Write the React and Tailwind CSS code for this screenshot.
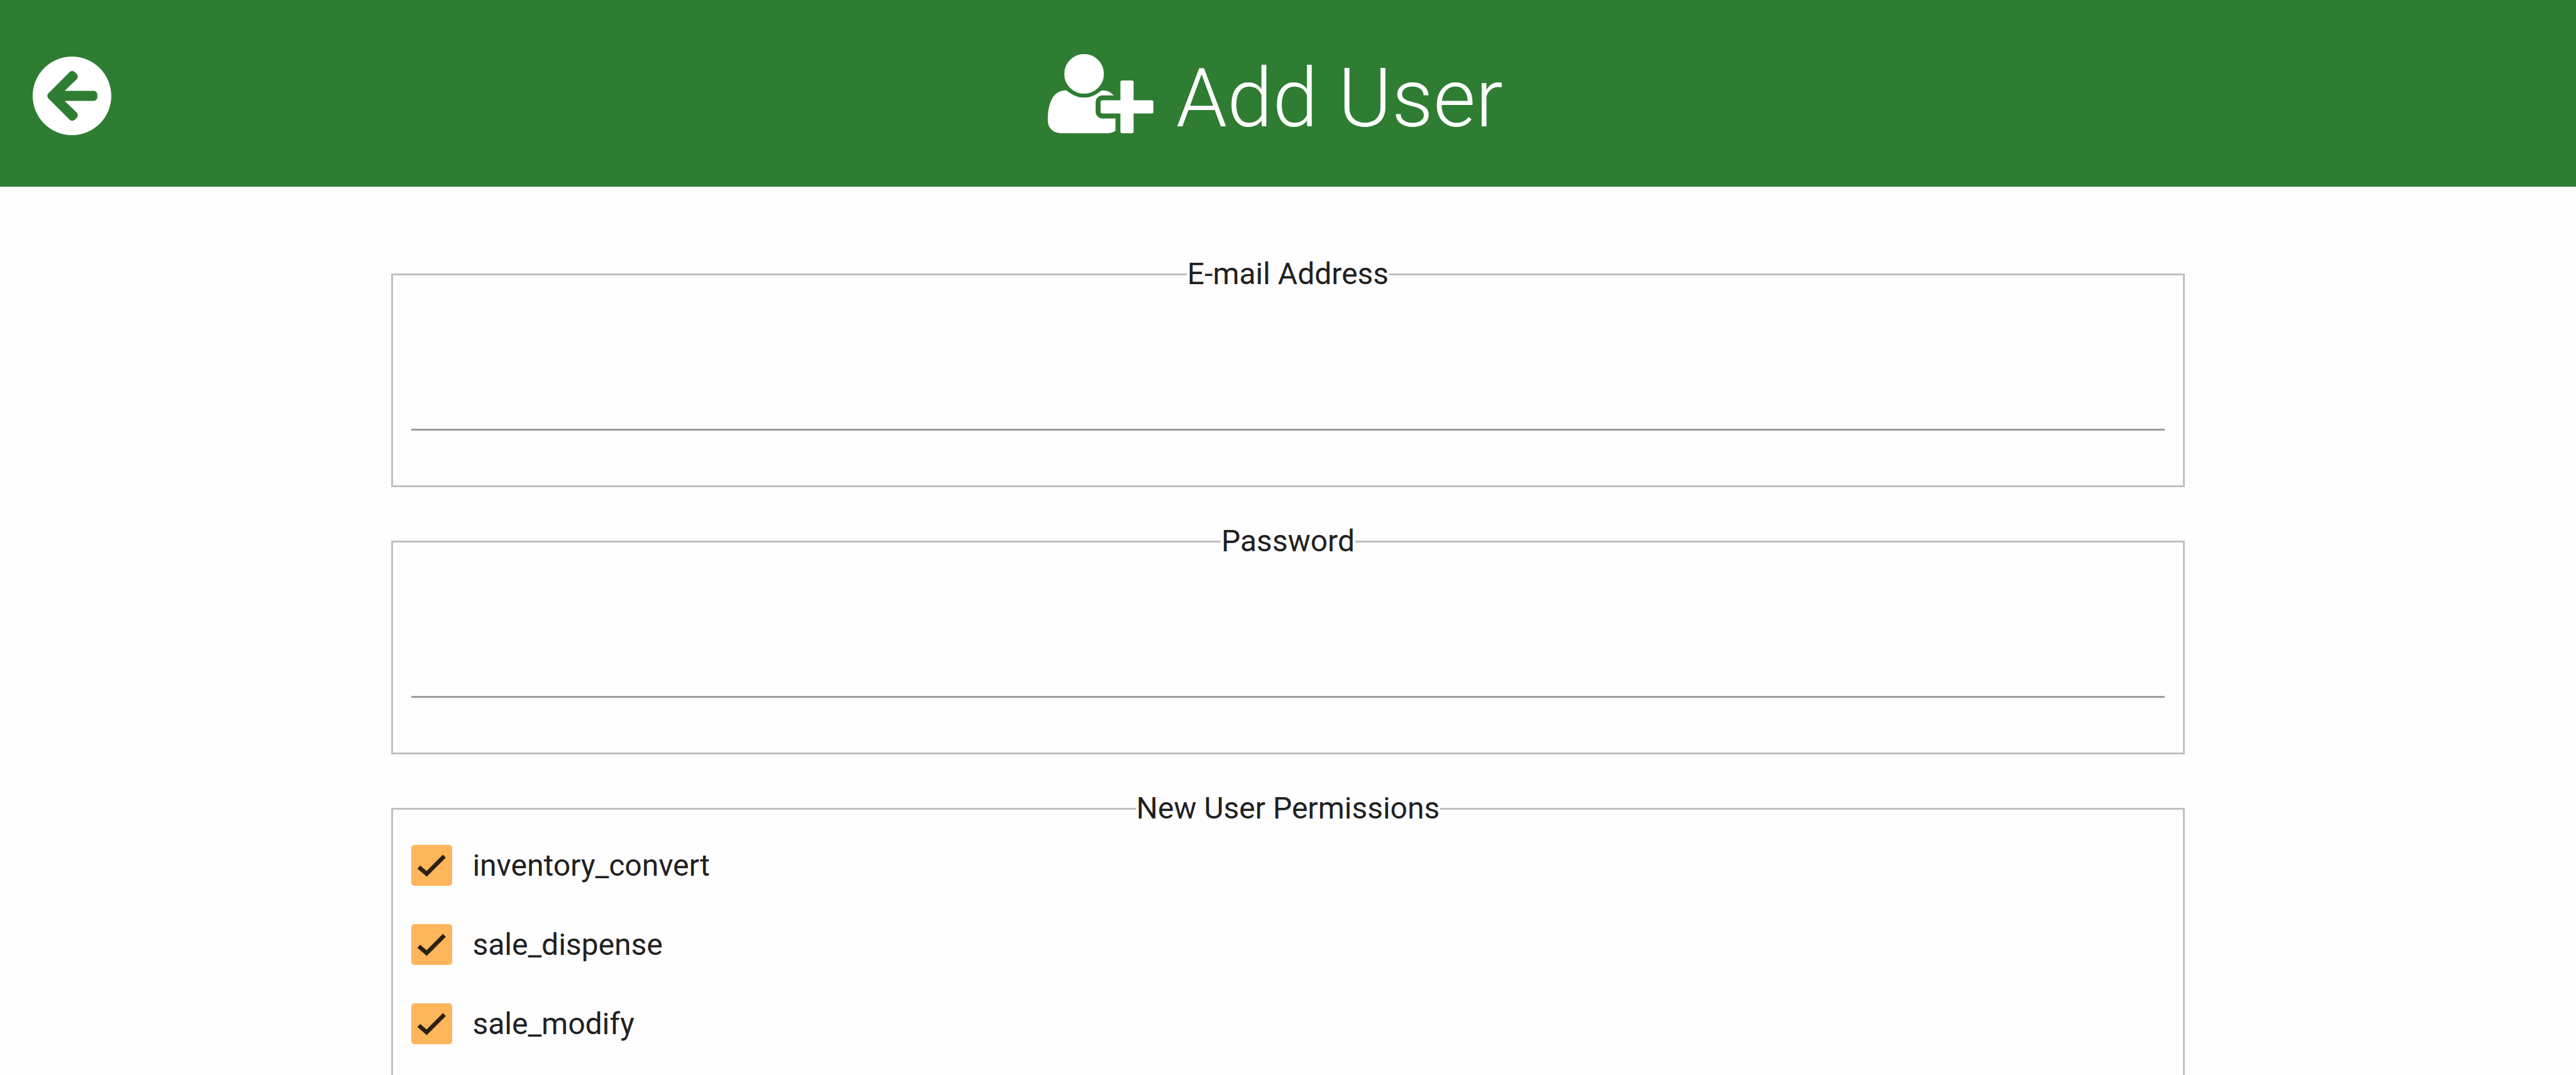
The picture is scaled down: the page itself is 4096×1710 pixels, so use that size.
import { FaArrowCircleLeft } from "react-icons/fa";

const permissions = ["inventory_convert", "sale_dispense", "sale_modify"];

function UserPlusIcon() {
  return (
    <svg viewBox="0 128 2048 1536" className="h-32 w-[168px]" fill="currentColor" aria-hidden="true">
      <path d="M704 896q-159 0-271.5-112.5t-112.5-271.5 112.5-271.5 271.5-112.5 271.5 112.5 112.5 271.5-112.5 271.5-271.5 112.5zm960 128h352q13 0 22.5 9.5t9.5 22.5v192q0 13-9.5 22.5t-22.5 9.5h-352v352q0 13-9.5 22.5t-22.5 9.5h-192q-13 0-22.5-9.5t-9.5-22.5v-352h-352q-13 0-22.5-9.5t-9.5-22.5v-192q0-13 9.5-22.5t22.5-9.5h352v-352q0-13 9.5-22.5t22.5-9.5h192q13 0 22.5 9.5t9.5 22.5v352zm-736 224q0 52 38 90t90 38h256v238q-68 50-171 50h-874q-121 0-194-69t-73-190q0-53 3.5-103.5t14-109 26.5-108.5 43-97.5 62-81 85.5-53.5 111.5-20q19 0 39 17 79 61 154.5 91.5t164.5 30.5 164.5-30.5 154.5-91.5q20-17 39-17 132 0 217 96h-223q-52 0-90 38t-38 90v192z" />
    </svg>
  );
}

function Field({ id, label, type }) {
  return (
    <fieldset className="border-3 border-[#c0c0c0] px-[29px] pb-[87px]">
      <legend className="mx-auto px-px">
        <label htmlFor={id}>{label}</label>
      </legend>
      <input
        id={id}
        type={type}
        className="block h-[219px] w-full border-b-3 border-[#9c9c9c] bg-transparent pt-20 outline-none"
      />
    </fieldset>
  );
}

function Permission({ name }) {
  return (
    <label className="flex items-center gap-8">
      <span className="grid size-[65px]">
        <input
          type="checkbox"
          defaultChecked
          className="col-start-1 row-start-1 size-full appearance-none rounded-[5px] bg-[#ffb55a]"
        />
        <svg
          viewBox="0 0 24 24"
          className="pointer-events-none col-start-1 row-start-1 size-full"
          fill="none"
          stroke="#2b2013"
          strokeWidth="2.4"
          aria-hidden="true"
        >
          <path d="M4.4 13 9 17 19.4 6.6" />
        </svg>
      </span>
      {name}
    </label>
  );
}

export default function App() {
  return (
    <div className="h-screen overflow-hidden bg-[#fefefe] font-['Roboto',sans-serif] text-[48px] leading-[60px] text-[#212121]">
      <header className="grid h-[297px] grid-cols-[1fr_auto_1fr] items-center bg-[#2e7d32] px-[50px] text-white">
        <button type="button" aria-label="Back" className="mt-2 justify-self-start">
          <FaArrowCircleLeft className="size-[129px]" />
        </button>
        <h1 className="flex items-center gap-9 pr-10 text-[130px] leading-[150px] font-light">
          <UserPlusIcon />
          <span className="pt-4">Add User</span>
        </h1>
      </header>
      <main className="mx-auto flex w-[70%] flex-col gap-14 px-2 pt-[109px]">
        <Field id="email" label="E-mail Address" type="email" />
        <Field id="password" label="Password" type="password" />
        <fieldset className="border-3 border-[#c0c0c0] px-[29px] pb-20">
          <legend className="mx-auto px-px">New User Permissions</legend>
          <div className="flex flex-col gap-[61px] pt-7">
            {permissions.map((name) => (
              <Permission key={name} name={name} />
            ))}
          </div>
        </fieldset>
      </main>
    </div>
  );
}
